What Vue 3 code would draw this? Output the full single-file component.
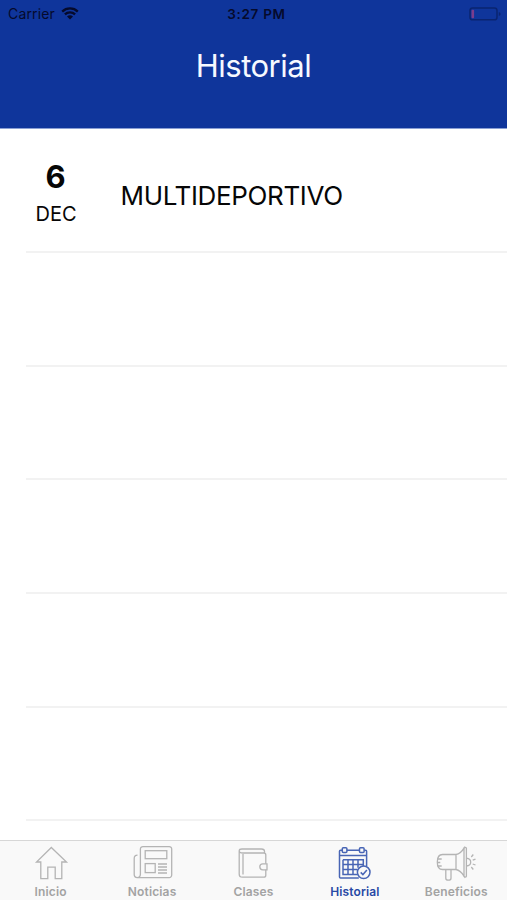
<script setup>
const tabs = ['Inicio', 'Noticias', 'Clases', 'Historial', 'Beneficios']
const entries = [{ day: '6', month: 'DEC', title: 'MULTIDEPORTIVO' }, null, null, null, null, null]
</script>

<template>
  <div class="screen">
    <header class="header">
      <div class="status">
        <div class="carrier">
          <span class="carrier-name">Carrier</span>
          <svg width="18" height="13" viewBox="0 0 18 13">
            <path d="M1.2 4.6a11.2 11.2 0 0 1 15.6 0M3.9 7.4a7.3 7.3 0 0 1 10.2 0" fill="none" stroke="#050a2c" stroke-width="2.3" />
            <path d="M9 12.6 6 9.6a4.3 4.3 0 0 1 6 0z" fill="#050a2c" />
          </svg>
        </div>
        <span class="time">3:27 PM</span>
        <svg class="battery" width="32" height="14" viewBox="0 0 32 14">
          <rect x="1" y="1" width="27" height="11.8" rx="2.6" fill="none" stroke="#0a2470" stroke-width="1.5" />
          <path d="M29.8 5v4q1.8-.7 1.8-2t-1.8-2z" fill="#0a2470" />
          <rect x="2.5" y="2.7" width="2.6" height="8.5" rx="1" fill="#7b3d8c" />
        </svg>
      </div>
      <h1 class="title">Historial</h1>
    </header>

    <main class="list">
      <div v-for="(entry, i) in entries" :key="i" class="row">
        <template v-if="entry">
          <div class="date">
            <span class="day">{{ entry.day }}</span>
            <span class="month">{{ entry.month }}</span>
          </div>
          <span class="name">{{ entry.title }}</span>
        </template>
      </div>
    </main>

    <nav class="tabs">
      <div v-for="tab in tabs" :key="tab" class="tab" :class="{ active: tab === 'Historial' }">
        <svg class="icon" width="48" height="40" viewBox="0 0 48 40">
          <g v-if="tab === 'Inicio'">
            <path d="M24.3 4.5 9.5 19h4.3v16.7h7V24.2h7.4v11.5h6.6V19h4.7z" />
          </g>
          <g v-else-if="tab === 'Noticias'">
            <path d="M15 3.6h26.2a2.5 2.5 0 0 1 2.5 2.5v26a2.5 2.5 0 0 1-2.5 2.5H9.2a3 3 0 0 1-3-3V15.5q0-3.3 3.3-3.3M12.4 31V6.1A2.5 2.5 0 0 1 15 3.6M12.4 31q0 3.6-3.2 3.6" />
            <rect x="17.2" y="7.7" width="21.6" height="8" />
            <rect x="17.2" y="20.6" width="10" height="9" />
            <path d="M30 21h9M30 24h9M30 27h9M30 30h9" />
          </g>
          <g v-else-if="tab === 'Clases'">
            <path d="M36.8 20.8V12q0-2-2-2H14q-3.8 0-3.8-2.2Q10.2 6 13 6h19.5q3 0 3 2.3V10M10.2 8v23q0 3.2 3.2 3.2h21.4q2 0 2-2V26.8" />
            <path d="M14 11v20.5" />
            <path d="M38 20.8h-4.2a3 3 0 0 0 0 6H38z" />
          </g>
          <g v-else-if="tab === 'Historial'">
            <path d="M11.2 7.2H9.500q-1 0-1 1v25.8q0 1 1 1h18.300M16 7.200h12.500M33.300 7.200h1.300q1 0 1 1v15M8.500 12.600h27.100" />
            <rect x="11.3" y="4.800" width="4.600" height="4.800" rx="1" />
            <rect x="28.5" y="4.800" width="4.600" height="4.800" rx="1" />
            <path d="M12 16.700h20.300v6.500M26.500 31.500H12V16.700M17 16.700v14.800M22 16.700v14.800M27 16.700v8M12 21.600h20.300M12 26.500h14.500" />
            <circle cx="32.7" cy="29.3" r="6.3" />
            <path d="m29.7 29.4 2.2 2.2 4-4.6" />
          </g>
          <g v-else>
            <path d="M24 11.500H10.500Q5.300 11.500 5.300 19T10.500 26.500H24zM24 11.500q4.500-.4 8-6.300v28q-3.500-6-8-6.700" />
            <path d="M32 5.200q1.600-1.700 2.400 0v28q-.8 1.700-2.400 0M34.400 15.200q4.300.6 4.300 4T34.400 23" />
            <path d="M13.800 26.500v8.700q0 2 2.600 2t2.600-2v-8.700M5.700 16h4M5.300 19.500h3M5.700 23h4M39.300 14l2-2.500M40.700 17.200l2.800-1M40.700 21l2.800 1M39.300 24l2 2.500" />
          </g>
        </svg>
        <span class="label">{{ tab }}</span>
      </div>
    </nav>
  </div>
</template>

<style>
body {
  margin: 0;
}
</style>

<style scoped>
.screen {
  display: flex;
  flex-direction: column;
  width: 507px;
  height: 900px;
  overflow: hidden;
  background: #fff;
  color: #060606;
  font-family: Inter, "Liberation Sans", sans-serif;
}

.header {
  height: 128px;
  flex: none;
  background: #0f359b;
  border-bottom: 1px solid #8a9fd4;
}

.status {
  display: grid;
  grid-template-columns: 1fr auto 1fr;
  align-items: center;
  height: 27px;
  padding: 0 6px 0 8px;
  color: #050a2c;
}

.carrier {
  display: flex;
  align-items: center;
  gap: 6px;
}

.carrier-name {
  font-size: 14px;
  line-height: 18px;
  letter-spacing: 0.15px;
}

.time {
  padding-left: 4px;
  font-size: 13.5px;
  font-weight: 600;
  letter-spacing: 0.7px;
}

.battery {
  justify-self: end;
}

.title {
  margin: 19px 0 0;
  color: #f6f9ff;
  font-size: 31px;
  font-weight: 400;
  line-height: 40px;
  letter-spacing: -0.5px;
  text-align: center;
}

.list {
  flex: 1;
  min-height: 0;
  overflow: hidden;
}

.row {
  display: flex;
  box-sizing: border-box;
  height: 113.7px;
  margin-left: 26px;
  border-bottom: 2px solid #f2f2f2;
}

.row:first-child {
  height: 124px;
}

.date {
  display: flex;
  flex-direction: column;
  align-items: center;
  width: 60px;
  padding-top: 28px;
}

.day {
  margin-left: -1px;
  font-size: 31px;
  font-weight: 700;
  line-height: 40px;
}

.month {
  font-size: 20px;
  line-height: 34px;
}

.name {
  padding: 47px 0 0 34.5px;
  font-size: 26px;
  line-height: 40px;
  letter-spacing: -0.35px;
}

.tabs {
  display: grid;
  grid-template-columns: repeat(5, 1fr);
  flex: none;
  box-sizing: border-box;
  height: 60px;
  background: #f9f9f9;
  border-top: 1px solid #d7d7d7;
}

.tab {
  display: flex;
  flex-direction: column;
  align-items: center;
  padding-top: 2px;
  color: #a3a3a3;
}

.icon {
  display: block;
  fill: none;
  stroke: #b4b4b4;
  stroke-width: 1.3;
}

.label {
  padding-top: 1px;
  font-size: 12px;
  font-weight: 600;
  line-height: 16px;
  letter-spacing: 0.15px;
}

.active {
  color: #2849a5;
}

.active .icon {
  stroke: #4865b5;
  stroke-width: 1.5;
}
</style>
